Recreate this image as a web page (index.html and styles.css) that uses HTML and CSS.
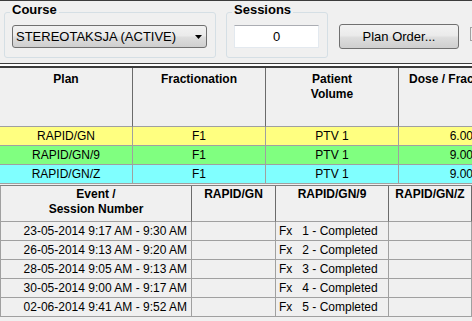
FILE: index.html
```html
<!DOCTYPE html>
<html lang="en">
<head>
    <meta charset="UTF-8">
    <meta name="viewport" content="width=device-width, initial-scale=1.0">
    <title>Treatment Sessions</title>
<link rel="stylesheet" href="styles.css">
</head>
<body>

<div class="toolbar">
    <fieldset class="group courseGroup">
        <legend>Course</legend>
        <div class="combo">
            <span>STEREOTAKSJA (ACTIVE)</span>
            <svg width="7" height="4" viewBox="0 0 7 4"><path d="M0 0H7L3.5 4Z" fill="#000"/></svg>
        </div>
    </fieldset>
    <fieldset class="group sessionsGroup">
        <legend>Sessions</legend>
        <div class="field">0</div>
    </fieldset>
    <div class="btn">Plan Order...</div>
    <div class="btnEdge"></div>
</div>
<div class="splitter"></div>

<div class="plans">
    <div class="row head">
        <div class="cell">Plan</div>
        <div class="cell">Fractionation</div>
        <div class="cell">Patient<br>Volume</div>
        <div class="cell dose">Dose / Fraction</div>
    </div>
    <div class="row yellow">
        <div class="cell">RAPID/GN</div>
        <div class="cell">F1</div>
        <div class="cell">PTV 1</div>
        <div class="cell num">6.00</div>
    </div>
    <div class="row green">
        <div class="cell">RAPID/GN/9</div>
        <div class="cell">F1</div>
        <div class="cell">PTV 1</div>
        <div class="cell num">9.00</div>
    </div>
    <div class="row cyan">
        <div class="cell">RAPID/GN/Z</div>
        <div class="cell">F1</div>
        <div class="cell">PTV 1</div>
        <div class="cell num">9.00</div>
    </div>
</div>

<div class="events">
    <div class="row head">
        <div class="cell">Event /<br>Session Number</div>
        <div class="cell">RAPID/GN</div>
        <div class="cell">RAPID/GN/9</div>
        <div class="cell">RAPID/GN/Z</div>
    </div>
    <div class="row">
        <div class="cell date">23-05-2014 9:17 AM - 9:30 AM</div>
        <div class="cell"></div>
        <div class="cell fx"><span>Fx</span>1 - Completed</div>
        <div class="cell"></div>
    </div>
    <div class="row">
        <div class="cell date">26-05-2014 9:13 AM - 9:20 AM</div>
        <div class="cell"></div>
        <div class="cell fx"><span>Fx</span>2 - Completed</div>
        <div class="cell"></div>
    </div>
    <div class="row">
        <div class="cell date">28-05-2014 9:05 AM - 9:13 AM</div>
        <div class="cell"></div>
        <div class="cell fx"><span>Fx</span>3 - Completed</div>
        <div class="cell"></div>
    </div>
    <div class="row">
        <div class="cell date">30-05-2014 9:00 AM - 9:17 AM</div>
        <div class="cell"></div>
        <div class="cell fx"><span>Fx</span>4 - Completed</div>
        <div class="cell"></div>
    </div>
    <div class="row">
        <div class="cell date">02-06-2014 9:41 AM - 9:52 AM</div>
        <div class="cell"></div>
        <div class="cell fx"><span>Fx</span>5 - Completed</div>
        <div class="cell"></div>
    </div>
</div>

</body>
</html>
```

FILE: styles.css
```css
body{
    margin: 0;
    background-color: #f0f0f0;
    font-family: "Liberation Sans", Arial, sans-serif;
    font-size: 12px;
    color: #000;
    overflow: hidden;
}
.toolbar{
    box-sizing: border-box;
    height: 63px;
    border-top: 1px solid #3c3c3c;
    padding-left: 4px;
    display: flex;
    align-items: flex-start;
    font-size: 13px;
    overflow: hidden;
}
.toolbar > *{
    flex-shrink: 0;
}
.group{
    box-sizing: border-box;
    margin: 1px 0 0 0;
    border: 1px solid #d5dfe5;
    border-radius: 3px;
    padding: 3px 8px 9px 7px;
    min-width: 0;
}
.group legend{
    font-weight: bold;
    line-height: 15px;
    padding: 0 2px 5px;
    margin-left: -2px;
}
.courseGroup{
    width: 212px;
}
.sessionsGroup{
    width: 102px;
    margin-left: 10px;
}
.combo{
    box-sizing: border-box;
    width: 195px;
    height: 23px;
    border: 1px solid #707070;
    border-radius: 3px;
    background: linear-gradient(#f2f2f2, #ebebeb 45%, #dddddd 55%, #cfcfcf);
    display: flex;
    align-items: center;
    justify-content: space-between;
    padding: 0 4px 0 3px;
}
.combo svg{
    margin-top: 1px;
}
.field{
    box-sizing: border-box;
    width: 85px;
    height: 23px;
    background-color: #fff;
    border: 1px solid #e3e9ef;
    border-top-color: #abadb3;
    text-align: center;
    line-height: 21px;
}
.btn{
    box-sizing: border-box;
    width: 120px;
    height: 25px;
    margin: 23px 0 0 11px;
    border: 1px solid #707070;
    border-radius: 3px;
    background: linear-gradient(#f2f2f2, #ebebeb 45%, #dddddd 55%, #cfcfcf);
    text-align: center;
    line-height: 23px;
}
.btnEdge{
    box-sizing: border-box;
    width: 14px;
    height: 14px;
    margin: 26px 0 0 11px;
    border: 1px solid #a0a0a0;
}
.splitter{
    height: 2px;
    border-top: 1px solid #3c3c3c;
    border-bottom: 2px solid #3c3c3c;
    background-color: #fff;
}

.row{
    display: grid;
}
.cell{
    box-sizing: border-box;
    height: 19px;
    line-height: 18px;
    border-right: 1px solid #a0a0a0;
    border-bottom: 1px solid #a0a0a0;
    text-align: center;
    white-space: nowrap;
    overflow: hidden;
}
.head .cell{
    font-weight: bold;
    line-height: 15px;
    border-right-color: #6b6b6b;
}

.plans{
    width: 472px;
    overflow: hidden;
}
.plans .row{
    width: 480px;
    grid-template-columns: 133px 133px 133px 81px;
}
.plans .head .cell{
    height: 59px;
    padding-top: 4px;
}
.plans .dose{
    text-align: left;
    padding-left: 10px;
}
.plans .num{
    text-align: right;
    padding-right: 6px;
}
.yellow{
    background-color: #ffff80;
}
.green{
    background-color: #80ff80;
}
.cyan{
    background-color: #80ffff;
}

.events{
    margin-top: 1px;
    border-top: 1px solid #808080;
}
.events .row{
    width: 472px;
    grid-template-columns: 192px 84px 113px 83px;
}
.events .cell:first-child{
    border-left: 1px solid #a0a0a0;
}
.events .head .cell{
    height: 36px;
    padding-top: 1px;
}
.events .date{
    text-align: right;
    padding-right: 4px;
}
.events .fx{
    text-align: left;
    padding-left: 3px;
}
.fx span{
    margin-right: 10px;
}
```
